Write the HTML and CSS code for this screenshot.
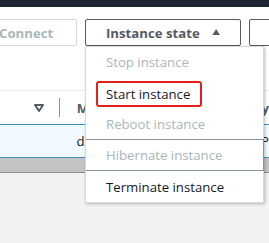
FILE: index.html
```html
<!DOCTYPE html>
<html>
<head>
<meta charset="utf-8">
<link rel="stylesheet" href="styles.css">
</head>
<body>
<div class="topbar"></div>
<div class="panel">
  <div class="toolbar">
    <button class="btn btn-disabled">Connect</button>
    <div class="dropdown">
      <button class="btn btn-open">Instance state
        <svg class="caret" width="10" height="8" viewBox="0 0 10 8"><polygon points="5,0.5 9.5,7.5 0.5,7.5" fill="#545b64"/></svg>
      </button>
      <ul class="menu">
        <li class="item disabled">Stop instance</li>
        <li class="item"><span class="mark">Start instance</span></li>
        <li class="item disabled">Reboot instance</li>
        <li class="item disabled boxed">Hibernate instance</li>
        <li class="item">Terminate instance</li>
      </ul>
    </div>
    <button class="btn btn-next"></button>
  </div>
  <div class="table">
    <div class="thead">
      <div class="cell c1">
        <svg width="10" height="8" viewBox="0 0 10 8"><polygon points="1,1 9,1 5,7" fill="none" stroke="#545b64" stroke-width="2" stroke-linejoin="round"/></svg>
        <span class="divider"></span>
      </div>
      <div class="cell c2 th">M</div>
      <div class="cell c3 th">y</div>
    </div>
    <div class="row selected">
      <div class="cell c1"></div>
      <div class="cell c2">d</div>
      <div class="cell c3">P</div>
    </div>
    <div class="hscroll"></div>
  </div>
</div>
</body>
</html>
```
FILE: styles.css
```css
* { box-sizing: border-box; }
html, body { margin: 0; padding: 0; }
body {
  background: #f2f2f2;
  font-family: "Open Sans", "Liberation Sans", sans-serif;
  font-size: 13.2px;
  color: #16191f;
  width: 269px;
  height: 243px;
  overflow: hidden;
}
.topbar { height: 7px; background: #1f2530; }
.panel { background: #ffffff; }
.toolbar {
  display: flex;
  gap: 8px;
  padding-top: 12px;
  margin-left: -19px;
  height: 83px;
  align-items: flex-start;
}
.btn {
  height: 27px;
  border: 1px solid #545b64;
  border-radius: 2px;
  background: #fff;
  font-family: inherit;
  font-size: 13.2px;
  font-weight: 700;
  padding: 0 20px;
  color: #545b64;
  display: flex;
  align-items: center;
  white-space: nowrap;
  flex-shrink: 0;
}
.btn-disabled { border-color: #d5dbdb; color: #aab7b8; width: 96px; padding: 0 0 0 17px; }
.btn-open { gap: 12px; width: 156px; }
.btn-next { width: 40px; }
.dropdown { position: relative; flex-shrink: 0; }
.caret { display: block; margin-top: -1px; }
.menu {
  position: absolute;
  top: 27px;
  left: 0;
  width: 179px;
  margin: 0;
  padding: 0;
  list-style: none;
  background: #fff;
  border: 1px solid #d5dbdb;
  box-shadow: 1px 1px 3px rgba(0,0,0,0.25);
  z-index: 5;
}
.item {
  height: 31px;
  display: flex;
  align-items: center;
  padding-left: 20px;
  font-weight: 400;
  color: #16191f;
}
.item:first-child { height: 30px; }
.item.disabled { color: #aab7b8; }
.item.boxed {
  border-top: 1px solid #879596;
  border-bottom: 1px solid #879596;
  border-right: 1px solid #879596;
  margin-right: -1px;
  height: 32px;
}
.mark {
  display: inline-block;
  margin-left: -10px;
  margin-top: 3px;
  padding: 0 10px 0 8px;
  line-height: 22px;
  border: 2px solid #e3201b;
  border-radius: 3px;
}
.table { border-top: 1px solid #eaeded; }
.thead, .row { display: flex; }
.thead { height: 34px; border-bottom: 1px solid #3c8fc4; }
.row.selected { height: 33px; background: #f1faff; border-bottom: 1px solid #3c8fc4; }
.cell { display: flex; align-items: center; }
.c1 { width: 60px; justify-content: flex-end; gap: 15px; }
.c2 { width: 203px; padding-left: 17px; color: #16191f; }
.c3 { flex: 1; color: #16191f; }
.th { font-weight: 700; color: #545b64; }
.divider { width: 1px; height: 19px; background: #879596; }
.hscroll { height: 15px; background: #c4c4c4; border-bottom: 1px solid #8e8e8e; }
```
